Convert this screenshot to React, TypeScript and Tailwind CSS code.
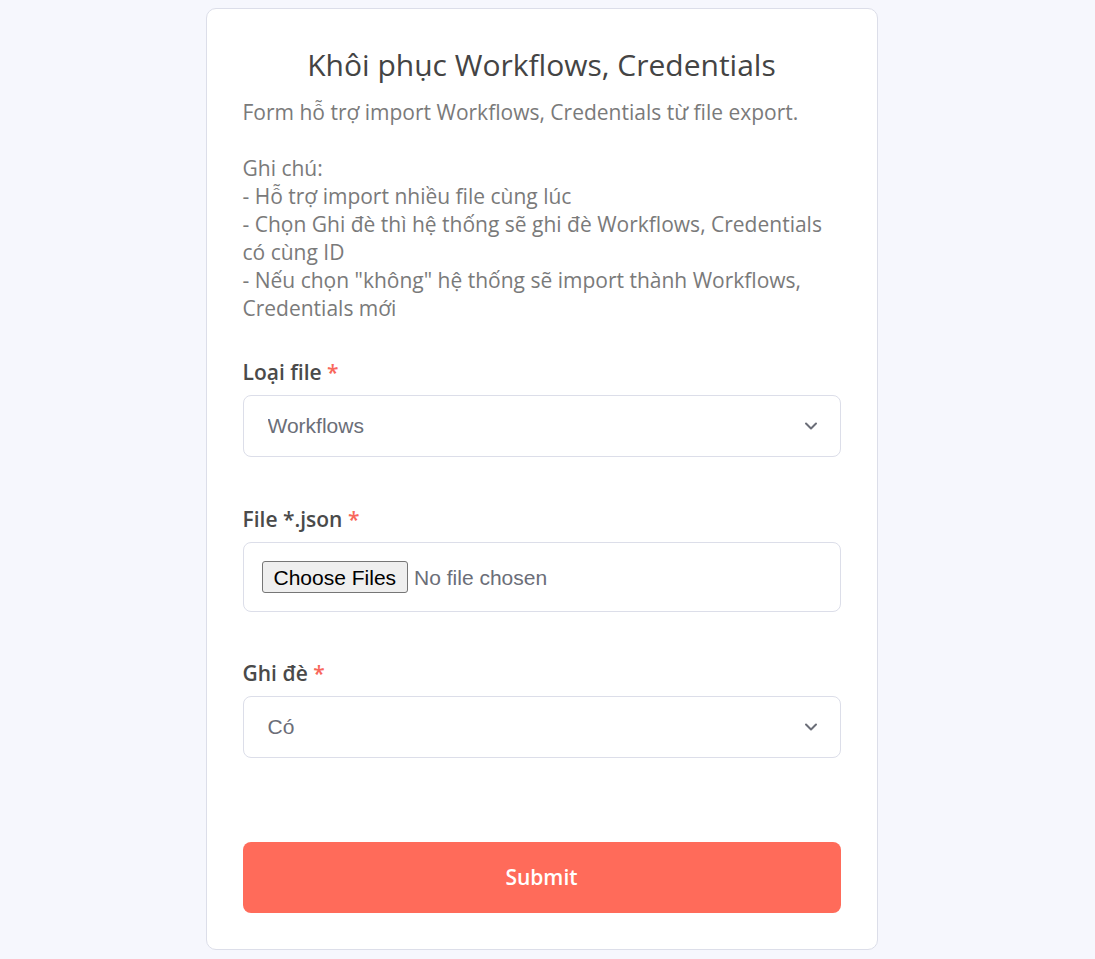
import { useState } from 'react';

function Chevron() {
  return (
    <svg
      className="pointer-events-none absolute right-[22px] top-1/2 -translate-y-1/2"
      width="16"
      height="16"
      viewBox="0 0 16 16"
      fill="none"
    >
      <path d="M3 5.5l5 5 5-5" stroke="#6b6e78" strokeWidth="2" strokeLinecap="round" strokeLinejoin="round" />
    </svg>
  );
}

function Label({ children }: { children: React.ReactNode }) {
  return (
    <label className="block text-[21px] leading-[28px] font-semibold text-[#4a4a4a] mb-[9px]">
      {children} <span className="text-[#f8675b]">*</span>
    </label>
  );
}

export default function App() {
  const [type, setType] = useState('workflows');
  const [overwrite, setOverwrite] = useState('yes');

  return (
    <div className="min-h-screen bg-[#f6f7fd] pt-2 pb-2 pr-3" style={{ fontFamily: '"Open Sans", "Noto Sans", sans-serif' }}>
      <div className="mx-auto w-[672px] bg-white border border-[#dcdee9] rounded-[10px] px-9 pt-9 pb-9">
        <h1 className="text-center text-[30px] leading-[40px] text-[#444444]">Khôi phục Workflows, Credentials</h1>
        <div className="mt-[13px] text-[21px] leading-[28px] text-[#7a7a7a]">
          <p>Form hỗ trợ import Workflows, Credentials từ file export.</p>
          <p>&nbsp;</p>
          <p>Ghi chú:</p>
          <p>- Hỗ trợ import nhiều file cùng lúc</p>
          <p>- Chọn Ghi đè thì hệ thống sẽ ghi đè Workflows, Credentials có cùng ID</p>
          <p>- Nếu chọn "không" hệ thống sẽ import thành Workflows, Credentials mới</p>
        </div>

        <div className="mt-9">
          <Label>Loại file</Label>
          <div className="relative">
            <select
              value={type}
              onChange={(e) => setType(e.target.value)}
              className="appearance-none w-full h-[62px] border border-[#dcdee9] rounded-[8px] bg-white pl-6 pr-12 text-[21px] text-[#6b6e78] outline-none"
              style={{ fontFamily: '"Liberation Sans", Arial, sans-serif' }}
            >
              <option value="workflows">Workflows</option>
              <option value="credentials">Credentials</option>
            </select>
            <Chevron />
          </div>
        </div>

        <div className="mt-12">
          <Label>File *.json</Label>
          <div className="h-[70px] border border-[#dcdee9] rounded-[8px] flex items-center px-[18px]">
            <input
              type="file"
              multiple
              accept=".json"
              className="text-[21px] text-[#6b6e78] file:text-black file:bg-[#efefef] file:border file:border-[#767676] file:rounded-[3px] file:px-[11px] file:h-[32px] file:mr-[6px]"
              style={{ fontFamily: '"Liberation Sans", Arial, sans-serif' }}
            />
          </div>
        </div>

        <div className="mt-[47px]">
          <Label>Ghi đè</Label>
          <div className="relative">
            <select
              value={overwrite}
              onChange={(e) => setOverwrite(e.target.value)}
              className="appearance-none w-full h-[62px] border border-[#dcdee9] rounded-[8px] bg-white pl-6 pr-12 text-[21px] text-[#6b6e78] outline-none"
              style={{ fontFamily: '"Liberation Sans", Arial, sans-serif' }}
            >
              <option value="yes">Có</option>
              <option value="no">Không</option>
            </select>
            <Chevron />
          </div>
        </div>

        <button className="mt-[84px] w-full h-[71px] rounded-[8px] bg-[#ff6b5a] text-white text-[21px] font-semibold">
          Submit
        </button>
      </div>
    </div>
  );
}
